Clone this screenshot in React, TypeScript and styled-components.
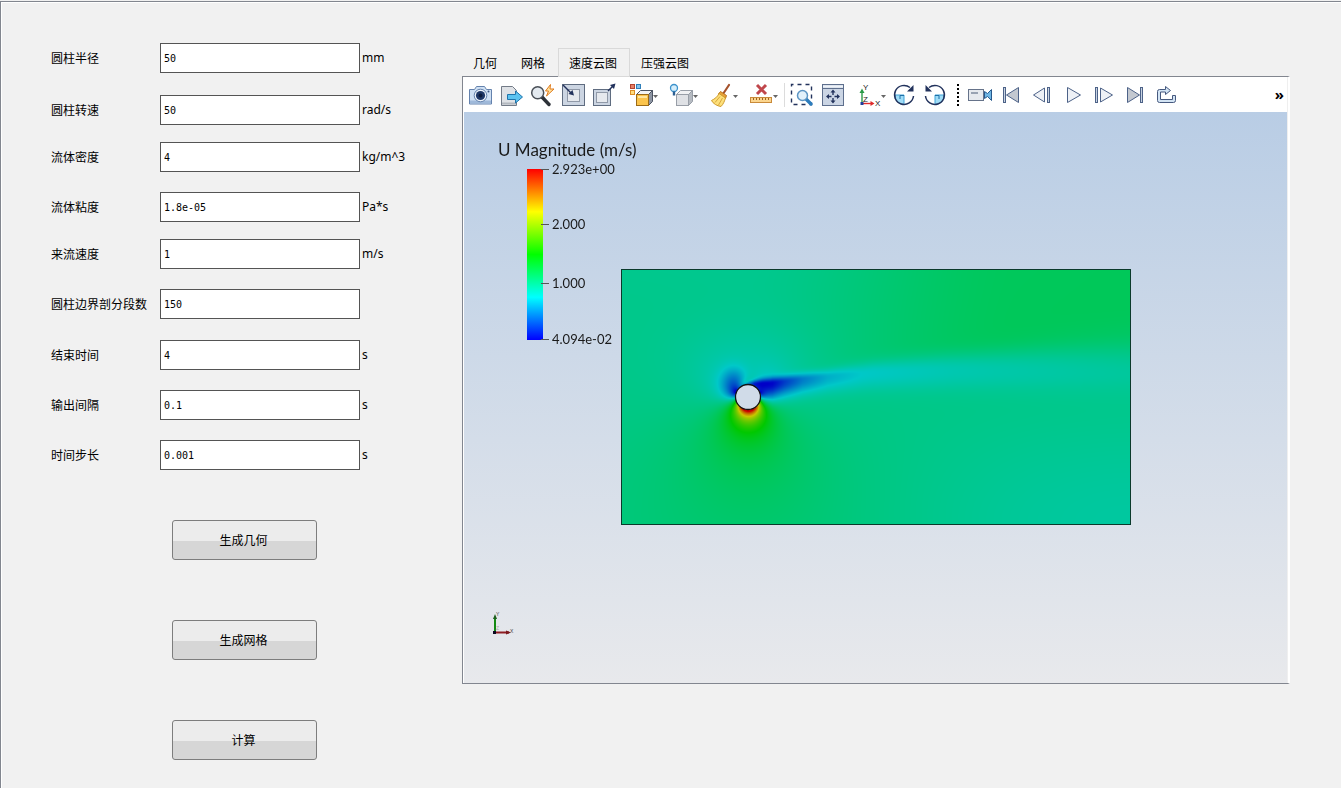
import React, { useEffect, useRef, useState } from "react";
import styled, { createGlobalStyle } from "styled-components";

const GlobalStyle = createGlobalStyle`
  * { box-sizing: border-box; }
  body {
    margin: 0;
    background: #f1f1f1;
    color: #000;
    font-family: "Noto Sans", "Noto Sans CJK SC", sans-serif;
    font-size: 12px;
  }
`;

const Page = styled.main`
  display: flex;
  min-height: 100vh;
  padding-top: 1px;
`;

const Frame = styled.div`
  display: flex;
  flex: 1;
  min-width: 0;
  border-top: 1px solid #82868f;
  border-left: 1px solid #82868f;
  box-shadow: inset 1px 1px 0 #fff;
`;

const Form = styled.form`
  flex: 0 0 461px;
  padding: 41px 0 28px 50px;
`;

const Field = styled.div<{ $gap: number }>`
  display: flex;
  align-items: center;
  height: 30px;
  margin-bottom: ${(p) => p.$gap}px;
`;

const FieldLabel = styled.label`
  flex: 0 0 109px;
  font-family: "Noto Sans CJK SC", sans-serif;
  line-height: 18px;
`;

const FieldInput = styled.input`
  width: 200px;
  height: 30px;
  padding: 0 3px;
  border: 1px solid #545454;
  border-radius: 0;
  background: #fff;
  color: #000;
  font: 10px "DejaVu Sans Mono", monospace;
  outline: none;
`;

const Unit = styled.span`
  margin-left: 2px;
  line-height: 18px;
`;

const Actions = styled.div`
  display: flex;
  flex-direction: column;
  gap: 60px;
  padding: 0 0 0 121px;
`;

const ActionButton = styled.button`
  width: 145px;
  height: 40px;
  padding: 0 2px 2px 0;
  border: 1px solid #7d7d7d;
  border-radius: 3px;
  background: linear-gradient(#ececec 0 52%, #d6d6d6 52% 100%);
  color: #000;
  font: 12px "Noto Sans CJK SC", sans-serif;
`;

const Results = styled.section`
  display: flex;
  flex: 1;
  flex-direction: column;
  min-width: 0;
  margin: 46px 51px 104px 0;
`;

const TabBar = styled.div`
  display: flex;
  height: 28px;
`;

const Tab = styled.button<{ $active: boolean }>`
  height: 29px;
  padding: 0 12px 0 10px;
  border: 1px solid ${(p) => (p.$active ? "#d9d9d9" : "transparent")};
  background: ${(p) => (p.$active ? "#f1f1f1" : "transparent")};
  color: #000;
  font: 12px "Noto Sans CJK SC", sans-serif;
  z-index: ${(p) => (p.$active ? 1 : 0)};
`;

const Panel = styled.div`
  display: flex;
  flex: 1;
  flex-direction: column;
  padding: 0 1px 0 1px;
  border: 1px solid #82868f;
  border-right: 2px solid #fff;
  background: linear-gradient(90deg, #fff 0 50%, #efefef 50% 100%);
`;

const Toolbar = styled.div`
  display: flex;
  align-items: center;
  height: 35px;
  padding-left: 1px;
  background: #fff;
`;

const ToolButton = styled.button<{ $menu?: boolean }>`
  flex: none;
  width: ${(p) => (p.$menu ? 39 : 31)}px;
  height: 31px;
  padding: 0;
  border: 0;
  background: none;

  svg {
    display: block;
  }
`;

const Space = styled.span<{ $w: number }>`
  flex: 0 0 ${(p) => p.$w}px;
`;

const Separator = styled.span`
  flex: 0 0 1px;
  height: 24px;
  margin-right: 1px;
  background: #dcdcdc;
`;

const Grip = styled.span`
  flex: 0 0 2px;
  height: 22px;
  margin: 0 6px;
  background: repeating-linear-gradient(#000 0 2px, transparent 2px 4px);
`;

const MoreButton = styled.button`
  margin-left: auto;
  padding: 0 3px 1px 0;
  border: 0;
  background: none;
  color: #000;
  font: bold 15px "Noto Sans", sans-serif;
`;

const Viewport = styled.div`
  position: relative;
  display: flex;
  flex: 1;
  align-items: center;
  justify-content: center;
  padding-bottom: 2px;
  background: linear-gradient(#b9cde5, #e8e9ec);
`;

const FieldCanvas = styled.canvas`
  width: 62%;
  max-width: 510px;
  border: 1px solid #0b3a2b;
`;

const Legend = styled.div`
  position: absolute;
  top: 27px;
  left: 34px;
  color: #1a1a1a;
  font-family: Lato, sans-serif;
`;

const LegendTitle = styled.div`
  font-size: 17px;
  line-height: 22px;
`;

const LegendBody = styled.div`
  display: flex;
  margin: 8px 0 0 29px;
`;

const ColorBar = styled.div`
  width: 16px;
  height: 171px;
  background: linear-gradient(#f00, #ff0 25%, #0f0 50%, #0ff 75%, #00f);
`;

const Ticks = styled.ul`
  display: grid;
  grid-template-rows: 55px 59px 56px 14px;
  height: 170px;
  margin: -8px 0 0 -2px;
  padding: 0;
  list-style: none;
`;

const Tick = styled.li`
  display: flex;
  align-items: center;
  gap: 3px;
  height: 16px;
  font-size: 13px;
  line-height: 16px;

  &::before {
    width: 8px;
    height: 1px;
    background: #555;
    content: "";
  }
`;

const AxisMarker = styled.svg`
  position: absolute;
  bottom: 46px;
  left: 26px;
`;

/* ---------- velocity field ---------- */

const FIELD_W = 508;
const FIELD_H = 254;
const CX = 126;
const CY = 127;
const R = 13;
const V_MIN = 0.04094;
const V_MAX = 2.923;

type Curve = [number, number][];

const WAKE_CENTER: Curve = [[112, 118], [127, 114], [148, 113], [180, 109], [210, 106], [250, 102], [330, 98], [420, 95], [508, 92]];
const WAKE_DEFICIT: Curve = [[115, 0], [122, 0.35], [132, 0.85], [140, 0.96], [150, 0.92], [162, 0.7], [180, 0.48], [205, 0.32], [240, 0.24], [330, 0.18], [420, 0.14], [508, 0.1]];
const WAKE_UPPER: Curve = [[120, 2], [150, 4], [200, 5], [260, 8], [380, 13], [508, 20]];
const WAKE_LOWER: Curve = [[120, 4], [150, 9], [200, 10], [260, 12], [380, 15], [508, 20]];

function sample(curve: Curve, x: number) {
  if (x <= curve[0][0]) return curve[0][1];
  for (let i = 1; i < curve.length; i++) {
    if (x <= curve[i][0]) {
      const [x0, y0] = curve[i - 1];
      const [x1, y1] = curve[i];
      return y0 + ((y1 - y0) * (x - x0)) / (x1 - x0);
    }
  }
  return curve[curve.length - 1][1];
}

const smooth = (a: number, b: number, x: number) => {
  const t = Math.min(1, Math.max(0, (x - a) / (b - a)));
  return t * t * (3 - 2 * t);
};

const bell = (x: number, y: number) => Math.exp(-(x * x + y * y) / 2);

function speedAt(px: number, py: number) {
  const x = (px - CX) / R;
  const y = (CY - py) / R;
  const r2 = Math.max(1, x * x + y * y);
  const r4 = r2 * r2;
  const r = Math.sqrt(r2);
  const spin = 0.82;
  const u = 1 - (x * x - y * y) / r4 - (spin * y) / r2;
  const v = (-2 * x * y) / r4 + (spin * x) / r2;
  let speed = Math.hypot(u, v);

  const below = Math.max(0, -y / r);
  speed += 0.3 * below * Math.exp(-(r - 1) / 0.9);

  const line = sample(WAKE_CENTER, px);
  const above = 1 - smooth(line - 30, line + 18, py);
  speed += 0.17 * above * smooth(110, 400, px);
  speed -= 0.1 * smooth(120, 500, px) * smooth(line, 254, py);

  speed += 0.06 * bell((px - 125) / 90, (py - 40) / 45);
  speed -= 0.3 * bell((px - 112) / 9, (py - 111) / 10);

  const d = py - line;
  const sigma = sample(d < 0 ? WAKE_UPPER : WAKE_LOWER, px);
  return speed * (1 - sample(WAKE_DEFICIT, px) * Math.exp(-(d * d) / (2 * sigma * sigma)));
}

function rainbow(value: number) {
  const t = Math.min(1, Math.max(0, (value - V_MIN) / (V_MAX - V_MIN))) * 4;
  const peak = 200;
  const ramp = (n: number) => Math.round(peak * Math.min(1, Math.max(0, n)));
  return [ramp(t - 2), ramp(Math.min(t, 4 - t)), ramp(2 - t)];
}

function VelocityField() {
  const ref = useRef<HTMLCanvasElement>(null);

  useEffect(() => {
    const ctx = ref.current?.getContext("2d");
    if (!ctx) return;
    const image = ctx.createImageData(FIELD_W, FIELD_H);
    for (let y = 0; y < FIELD_H; y++) {
      for (let x = 0; x < FIELD_W; x++) {
        const [r, g, b] = rainbow(speedAt(x, y));
        const i = (y * FIELD_W + x) * 4;
        image.data[i] = r;
        image.data[i + 1] = g;
        image.data[i + 2] = b;
        image.data[i + 3] = 255;
      }
    }
    ctx.putImageData(image, 0, 0);
    ctx.beginPath();
    ctx.arc(CX, CY, R - 0.5, 0, Math.PI * 2);
    ctx.fillStyle = "#d0dbe8";
    ctx.fill();
    ctx.lineWidth = 1.3;
    ctx.strokeStyle = "#111";
    ctx.stroke();
  }, []);

  return <FieldCanvas ref={ref} width={FIELD_W} height={FIELD_H} role="img" aria-label="速度云图" />;
}

/* ---------- toolbar icons ---------- */

const NAVY = "#22325c";
const STEEL = "#4d6288";

function Icon({ menuAt, children }: { menuAt?: number; children: React.ReactNode }) {
  return (
    <svg width={menuAt ? 39 : 31} height="31" viewBox={`0 0 ${menuAt ? 39 : 31} 31`} fill="none" aria-hidden="true">
      {children}
      {menuAt && <path d={`M${menuAt} 16h5l-2.5 3z`} fill="#666" />}
    </svg>
  );
}

const CameraIcon = () => (
  <Icon>
    <path d="M4.500 10.500h5l2-3h8l2 3h5v14.500h-22z" fill="#cfe0f3" stroke="#6482ad" />
    <path d="M5 21.500h21v3h-21z" fill="#9fb9da" />
    <circle cx="15.500" cy="16.500" r="6.300" fill="#eef4fb" stroke="#6482ad" />
    <circle cx="15.500" cy="16.500" r="4.600" fill="#1f3866" />
    <circle cx="15.500" cy="16.500" r="2" fill="#0d1c3c" />
    <circle cx="23.500" cy="12.500" r="1" fill="#3c5580" />
  </Icon>
);

const ExportIcon = () => (
  <Icon>
    <path d="M5.500 7.500h11l4 4v15h-15z" fill="#dfe2e6" stroke="#737b87" />
    <path d="M6 24.500h14" stroke="#b3b8bf" strokeWidth="2" />
    <path d="M11.500 15.500h8v-3.500l7 6-7 6v-3.500h-8z" fill="#5cc3f0" stroke="#1f74ac" />
  </Icon>
);

const FindIcon = () => (
  <Icon>
    <path d="M15 18l7 7.500" stroke="#2d3138" strokeWidth="3.400" strokeLinecap="round" />
    <circle cx="10.700" cy="13.700" r="6" fill="#e4eaf0" stroke="#4a5058" strokeWidth="1.500" />
    <path d="M23.500 5.500l-5 6.500h3l-2 5 7.500-7h-4z" fill="#ffe3a0" stroke="#e07b1d" />
  </Icon>
);

const ShrinkIcon = () => (
  <Icon>
    <rect x="4.500" y="5.500" width="22" height="21" fill="#ccd5e2" stroke="#5f6c80" />
    <rect x="9.500" y="10.500" width="12" height="12" fill="#e6e9ee" stroke="#9099a8" />
    <path d="M5 6l8 8" stroke={NAVY} strokeWidth="1.500" />
    <path d="M16 16.500l-5.500-1.500 4-4z" fill={NAVY} />
  </Icon>
);

const ExpandIcon = () => (
  <Icon>
    <rect x="4.500" y="10.500" width="17" height="16" fill="#ccd5e2" stroke="#5f6c80" />
    <rect x="7.500" y="13.500" width="11" height="10" fill="#e6e9ee" stroke="#9099a8" />
    <path d="M19 12l5-5" stroke={NAVY} strokeWidth="1.500" />
    <path d="M26.500 4.500l-1.500 5.500-4-4z" fill={NAVY} />
  </Icon>
);

const ColorCubeIcon = () => (
  <Icon menuAt={25}>
    <rect x="2.500" y="5.500" width="4" height="4" fill="#e58168" stroke="#b5442f" />
    <rect x="8.500" y="5.500" width="4" height="4" fill="#83c4ee" stroke="#2f7fb9" />
    <rect x="2.500" y="11.500" width="4" height="4" fill="#ffdc7c" stroke="#dc8e25" />
    <path d="M8.500 15.500l4-4h12l-4 4z" fill="#f2f3f5" stroke="#4d5563" />
    <path d="M20.500 15.500l4-4v11l-4 4z" fill="#8d95a3" stroke="#4d5563" />
    <rect x="8.500" y="15.500" width="12" height="11" fill="#fbc44c" stroke="#9b6a17" />
    <path d="M10 18h9" stroke="#ffe6a0" strokeWidth="2" />
  </Icon>
);

const LightCubeIcon = () => (
  <Icon menuAt={26}>
    <path d="M9.500 15.500l4-4h12l-4 4z" fill="#f0f1f3" stroke="#989ea7" />
    <path d="M21.500 15.500l4-4v11l-4 4z" fill="#b6bbc2" stroke="#989ea7" />
    <rect x="9.500" y="15.500" width="12" height="11" fill="#dfe1e5" stroke="#989ea7" />
    <circle cx="7" cy="9" r="3.500" fill="#d5eefb" stroke="#3c92cc" strokeWidth="1.300" />
    <path d="M7 12.500v4" stroke="#2c5f92" strokeWidth="2.400" />
  </Icon>
);

const BroomIcon = () => (
  <Icon menuAt={27}>
    <path d="M23 6l-6 9" stroke="#a5522c" strokeWidth="2.200" strokeLinecap="round" />
    <path d="M14.500 12.500l6 4-1 3-7-4.500z" fill="#e8a03a" stroke="#b8741c" />
    <path d="M13 14.500l6.500 4.500c-1 3-2 6-4.500 8.500-4-.5-8-3-9.500-6 3-1.500 6-3.500 7.500-7z" fill="#fde07a" stroke="#cf9a2c" />
    <path d="M14 17.500l-5 6M16.500 19l-4 7" stroke="#d9a640" />
  </Icon>
);

const RulerIcon = () => (
  <Icon menuAt={28}>
    <path d="M12 6l9 9M21 6l-9 9" stroke="#c0474c" strokeWidth="3" />
    <rect x="5.500" y="18.500" width="21" height="5" fill="#fbd58e" stroke="#c98a3a" />
    <path d="M8.500 19v2M11.500 19v2M14.500 19v2M17.500 19v2M20.500 19v2M23.500 19v2" stroke="#9b6220" />
  </Icon>
);

const ZoomBoxIcon = () => (
  <Icon>
    <rect x="5.500" y="5.500" width="20" height="20" stroke={NAVY} strokeWidth="1.400" strokeDasharray="4 4" strokeDashoffset="2" />
    <path d="M20 20l5 5" stroke="#2d7dbd" strokeWidth="3.400" strokeLinecap="round" />
    <circle cx="16.500" cy="16.500" r="5" fill="#e2f1fb" stroke="#5c95c4" strokeWidth="1.500" />
  </Icon>
);

const ResetViewIcon = () => (
  <Icon>
    <rect x="5.500" y="5.500" width="21" height="21" fill="#cbd5e4" stroke="#5e6f8d" />
    <path d="M6 7.500h20" stroke="#eff3f8" strokeWidth="2" />
    <path d="M6 9.500h20" stroke="#5e6f8d" />
    <path d="M16 16v-4M16 19v4M14.500 17.500h-4M17.500 17.500h4" stroke={NAVY} strokeWidth="1.400" />
    <path d="M16 10.500l2.500 3h-5zM16 24.500l2.500-3h-5zM9 17.500l3-2.500v5zM23 17.500l-3-2.500v5z" fill={NAVY} />
  </Icon>
);

const AxesIcon = () => (
  <Icon menuAt={31}>
    <path d="M12 24v-11" stroke="#2a9a49" strokeWidth="1.400" />
    <path d="M12 9.500l2.500 4.500h-5z" fill="#2a9a49" />
    <path d="M12 24.500h9" stroke="#e02b2b" strokeWidth="1.400" />
    <path d="M24.500 24.500l-4-2.500v5z" fill="#e02b2b" />
    <rect x="10.500" y="23" width="3" height="3" fill="#213f9c" />
    <g fill="#222" fontFamily="Liberation Sans, sans-serif" fontSize="8">
      <text x="13" y="11">Y</text>
      <text x="13" y="23">Z</text>
      <text x="25" y="27">X</text>
    </g>
  </Icon>
);

const rotateShape = (
  <>
    <path d="M15 16v9.500a9.500 9.500 0 0 1-9.500-9.500z" fill="#9fdcf7" stroke="#3fa3d8" />
    <path d="M11 20v-3.500h4" stroke="#1f6fa6" />
    <path d="M21 8.500a9.500 9.500 0 1 0 3.500 8.500" stroke={NAVY} strokeWidth="1.500" />
    <path d="M24.500 6v6.500h-6.500z" fill={NAVY} />
  </>
);

const RotateCwIcon = () => <Icon>{rotateShape}</Icon>;
const RotateCcwIcon = () => (
  <Icon>
    <g transform="translate(30 0) scale(-1 1)">{rotateShape}</g>
  </Icon>
);

const VideoIcon = () => (
  <Icon>
    <rect x="3.500" y="10.500" width="15" height="11" fill="#e6e9ee" stroke="#66738a" />
    <path d="M6 14h7" stroke="#98a2b2" strokeWidth="2" />
    <path d="M19.500 12.500l3 2 4-4v11l-4-4-3 2z" fill="#6fb6e4" stroke="#27588c" />
  </Icon>
);

const FirstIcon = () => (
  <Icon>
    <rect x="7.500" y="8.500" width="2" height="15" fill="#c8d3e2" stroke={STEEL} />
    <path d="M22.500 8.500v15l-12-7.500z" fill="#c3c8d0" stroke={STEEL} />
  </Icon>
);

const PrevIcon = () => (
  <Icon>
    <path d="M17.500 9v14l-11-7z" fill="#eef1f6" stroke={STEEL} />
    <rect x="20.500" y="8.500" width="2" height="15" fill="#c8d3e2" stroke={STEEL} />
  </Icon>
);

const PlayIcon = () => (
  <Icon>
    <path d="M9.500 8.500v15l13-7.500z" fill="#eef1f6" stroke={STEEL} />
  </Icon>
);

const NextIcon = () => (
  <Icon>
    <rect x="6.500" y="8.500" width="2" height="15" fill="#c8d3e2" stroke={STEEL} />
    <path d="M11.500 9v14l12-7z" fill="#eef1f6" stroke={STEEL} />
  </Icon>
);

const LastIcon = () => (
  <Icon>
    <path d="M7.500 8.500v15l12-7.500z" fill="#c3c8d0" stroke={STEEL} />
    <rect x="20.500" y="8.500" width="2" height="15" fill="#c8d3e2" stroke={STEEL} />
  </Icon>
);

const LoopIcon = () => (
  <Icon>
    <path d="M8.500 23.500q-2 0-2-2v-9q0-2 2-2h6v-3l5 4-5 4v-2.500h-5v7.500h12v-4h3v5q0 2-2 2z" fill="#d3e4f4" stroke="#46597f" />
  </Icon>
);

/* ---------- data ---------- */

const FIELDS = [
  { id: "radius", label: "圆柱半径", value: "50", unit: "mm", gap: 22 },
  { id: "spin", label: "圆柱转速", value: "50", unit: "rad/s", gap: 17 },
  { id: "density", label: "流体密度", value: "4", unit: "kg/m^3", gap: 20 },
  { id: "viscosity", label: "流体粘度", value: "1.8e-05", unit: "Pa*s", gap: 17 },
  { id: "inflow", label: "来流速度", value: "1", unit: "m/s", gap: 20 },
  { id: "segments", label: "圆柱边界剖分段数", value: "150", unit: "", gap: 21 },
  { id: "end", label: "结束时间", value: "4", unit: "s", gap: 20 },
  { id: "interval", label: "输出间隔", value: "0.1", unit: "s", gap: 20 },
  { id: "step", label: "时间步长", value: "0.001", unit: "s", gap: 50 },
];

const TABS = ["几何", "网格", "速度云图", "压强云图"];
const ACTIONS = ["生成几何", "生成网格", "计算"];
const TICKS = ["2.923e+00", "2.000", "1.000", "4.094e-02"];

type Tool = { name: string; icon: React.FC; menu?: boolean };

const VIEW_TOOLS: Tool[] = [
  { name: "截图", icon: CameraIcon },
  { name: "导出", icon: ExportIcon },
  { name: "查找", icon: FindIcon },
  { name: "缩小", icon: ShrinkIcon },
  { name: "放大", icon: ExpandIcon },
];
const DISPLAY_TOOLS: Tool[] = [
  { name: "颜色", icon: ColorCubeIcon, menu: true },
  { name: "光照", icon: LightCubeIcon, menu: true },
  { name: "清除", icon: BroomIcon, menu: true },
  { name: "测量", icon: RulerIcon, menu: true },
];
const CAMERA_TOOLS: Tool[] = [
  { name: "框选缩放", icon: ZoomBoxIcon },
  { name: "重置视图", icon: ResetViewIcon },
];
const ROTATE_TOOLS: Tool[] = [
  { name: "坐标轴", icon: AxesIcon, menu: true },
  { name: "顺时针", icon: RotateCwIcon },
  { name: "逆时针", icon: RotateCcwIcon },
];
const PLAY_TOOLS: Tool[] = [
  { name: "录制", icon: VideoIcon },
  { name: "首帧", icon: FirstIcon },
  { name: "上一帧", icon: PrevIcon },
  { name: "播放", icon: PlayIcon },
  { name: "下一帧", icon: NextIcon },
  { name: "末帧", icon: LastIcon },
  { name: "循环", icon: LoopIcon },
];

const Tools = ({ items }: { items: Tool[] }) => (
  <>
    {items.map(({ name, icon: Glyph, menu }) => (
      <ToolButton key={name} type="button" aria-label={name} $menu={menu}>
        <Glyph />
      </ToolButton>
    ))}
  </>
);

export default function App() {
  const [tab, setTab] = useState("速度云图");

  return (
    <Page>
      <GlobalStyle />
      <Frame>
        <Form onSubmit={(e) => e.preventDefault()}>
          {FIELDS.map((f) => (
            <Field key={f.id} $gap={f.gap}>
              <FieldLabel htmlFor={f.id}>{f.label}</FieldLabel>
              <FieldInput id={f.id} defaultValue={f.value} />
              {f.unit && <Unit>{f.unit}</Unit>}
            </Field>
          ))}
          <Actions>
            {ACTIONS.map((a) => (
              <ActionButton key={a} type="button">{a}</ActionButton>
            ))}
          </Actions>
        </Form>

        <Results>
          <TabBar role="tablist">
            {TABS.map((t) => (
              <Tab key={t} type="button" role="tab" aria-selected={t === tab} $active={t === tab} onClick={() => setTab(t)}>
                {t}
              </Tab>
            ))}
          </TabBar>
          <Panel role="tabpanel">
            <Toolbar role="toolbar">
              <Tools items={VIEW_TOOLS} />
              <Space $w={8} />
              <Tools items={DISPLAY_TOOLS} />
              <Separator />
              <Tools items={CAMERA_TOOLS} />
              <Space $w={2} />
              <Tools items={ROTATE_TOOLS} />
              <Grip />
              <Tools items={PLAY_TOOLS} />
              <MoreButton type="button" aria-label="更多">»</MoreButton>
            </Toolbar>
            <Viewport>
              <VelocityField />
              <Legend>
                <LegendTitle>U Magnitude (m/s)</LegendTitle>
                <LegendBody>
                  <ColorBar />
                  <Ticks>
                    {TICKS.map((t) => (
                      <Tick key={t}>{t}</Tick>
                    ))}
                  </Ticks>
                </LegendBody>
              </Legend>
              <AxisMarker width="28" height="26" viewBox="0 0 28 26" aria-hidden="true">
                <path d="M5 21v-15" stroke="#128a12" strokeWidth="2" />
                <path d="M5 3l2 5h-4z" fill="#1c5f1c" />
                <path d="M5 21.500h14" stroke="#8e1c22" strokeWidth="2" />
                <path d="M21 21.500l-5-2v4z" fill="#7a1a1e" />
                <rect x="3" y="20" width="3" height="3" fill="#0a0a22" />
                <g fill="#444" fontFamily="Liberation Sans, sans-serif" fontSize="5">
                  <text x="6" y="5">Y</text>
                  <text x="6" y="19" fill="#aaa">Z</text>
                  <text x="20" y="22">X</text>
                </g>
              </AxisMarker>
            </Viewport>
          </Panel>
        </Results>
      </Frame>
    </Page>
  );
}
